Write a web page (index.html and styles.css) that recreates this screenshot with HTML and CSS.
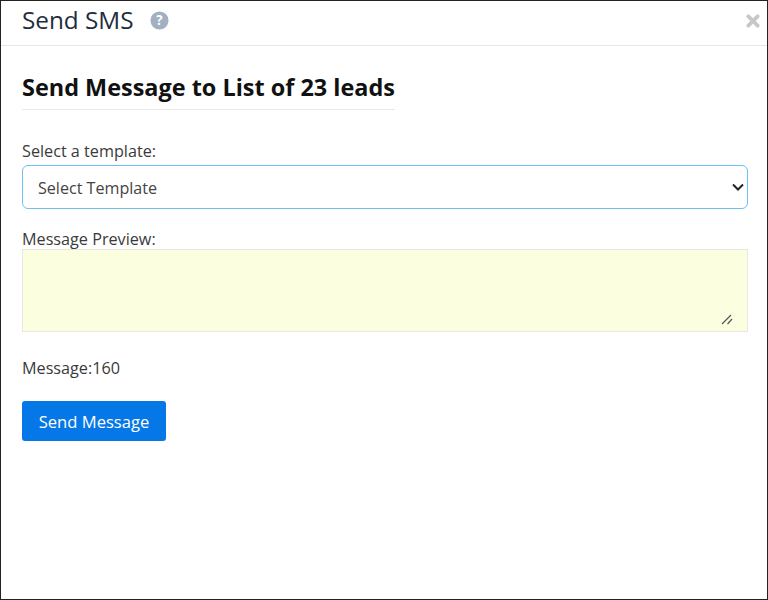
FILE: index.html
```html
<!DOCTYPE html>
<html lang="en">
<head>
<meta charset="utf-8">
<title>Send SMS</title>
<link rel="stylesheet" href="styles.css">
</head>
<body>
<div class="frame">
  <header class="modal-head">
    <h1 class="modal-title">Send SMS</h1>
    <svg class="help" viewBox="0 0 20 20" aria-hidden="true"><circle cx="10" cy="10" r="9.5" fill="#a3b0c0"/><text x="10" y="14.8" text-anchor="middle" class="help-q">?</text></svg>
    <svg class="close" viewBox="0 0 12 12" aria-hidden="true"><path d="M2 2L10 10M10 2L2 10" stroke="#c8c8c8" stroke-width="3.2" stroke-linecap="round"/></svg>
  </header>
  <main class="modal-body">
    <h2 class="section-title">Send Message to List of 23 leads</h2>
    <label class="field-label">Select a template:</label>
    <div class="select">
      <span>Select Template</span>
      <svg class="chev" viewBox="0 0 14 10" aria-hidden="true"><path d="M2 2.5L7 7.5L12 2.5" fill="none" stroke="#222" stroke-width="2"/></svg>
    </div>
    <label class="field-label preview-label">Message Preview:</label>
    <div class="preview">
      <svg class="grip" viewBox="0 0 12 12" aria-hidden="true"><path d="M1 11L10 2M6.5 11L11 6" stroke="#555" stroke-width="1.2"/></svg>
    </div>
    <p class="count">Message:160</p>
    <button class="send" type="button">Send Message</button>
  </main>
</div>
</body>
</html>
```
FILE: styles.css
```css
* { box-sizing: border-box; }
html, body { margin: 0; height: 100%; background: #fff; }
body { font-family: "Open Sans", "Noto Sans", sans-serif; color: #3a3a3a; }
.frame { width: 768px; height: 600px; border: 1px solid #222; overflow: hidden; }
.modal-head { height: 45px; border-bottom: 1px solid #e6e6e6; display: flex; align-items: center; padding: 0 7px 5px 21px; }
.modal-title { margin: 0; font-size: 24.3px; font-weight: 400; color: #1f2d3d; line-height: 1; }
.help { width: 19px; height: 19px; margin-left: 16px; }
.help-q { font: 700 14px "Open Sans", sans-serif; fill: #fff; }
.close { width: 14px; height: 14px; margin-left: auto; }
.modal-body { padding: 0 19px 0 21px; }
.section-title { display: block; margin: 25px 0 0; padding-bottom: 6px; font-size: 23.45px; font-weight: 700; color: #111; line-height: 32px; border-bottom: 1px solid #e8e8e8; width: 373px; white-space: nowrap; }
.field-label { display: block; font-size: 16.2px; line-height: 22px; color: #3a3a3a; }
.section-title + .field-label { margin-top: 30px; }
.select { margin-top: 3px; height: 44px; border: 1.5px solid #6cc1f4; border-radius: 6px; display: flex; align-items: center; justify-content: space-between; padding: 2px 2.5px 0 15px; font-size: 16.1px; color: #444; }
.chev { width: 14px; height: 10px; margin-top: -2px; }
.preview-label { margin-top: 20px; line-height: 20px; }
.preview { height: 83px; background: #fcfee0; border: 1px solid #e8e8e0; display: flex; align-items: flex-end; justify-content: flex-end; padding: 0 14px 6px 0; }
.grip { width: 12px; height: 12px; }
.count { margin: 25px 0 0; font-size: 16.2px; line-height: 22px; color: #3a3a3a; }
.send { display: block; margin-top: 22px; width: 144px; height: 40px; padding: 0; background: #0677e6; color: #fff; border: 0; border-radius: 3px; font: 400 16.6px "Open Sans", sans-serif; }
```
